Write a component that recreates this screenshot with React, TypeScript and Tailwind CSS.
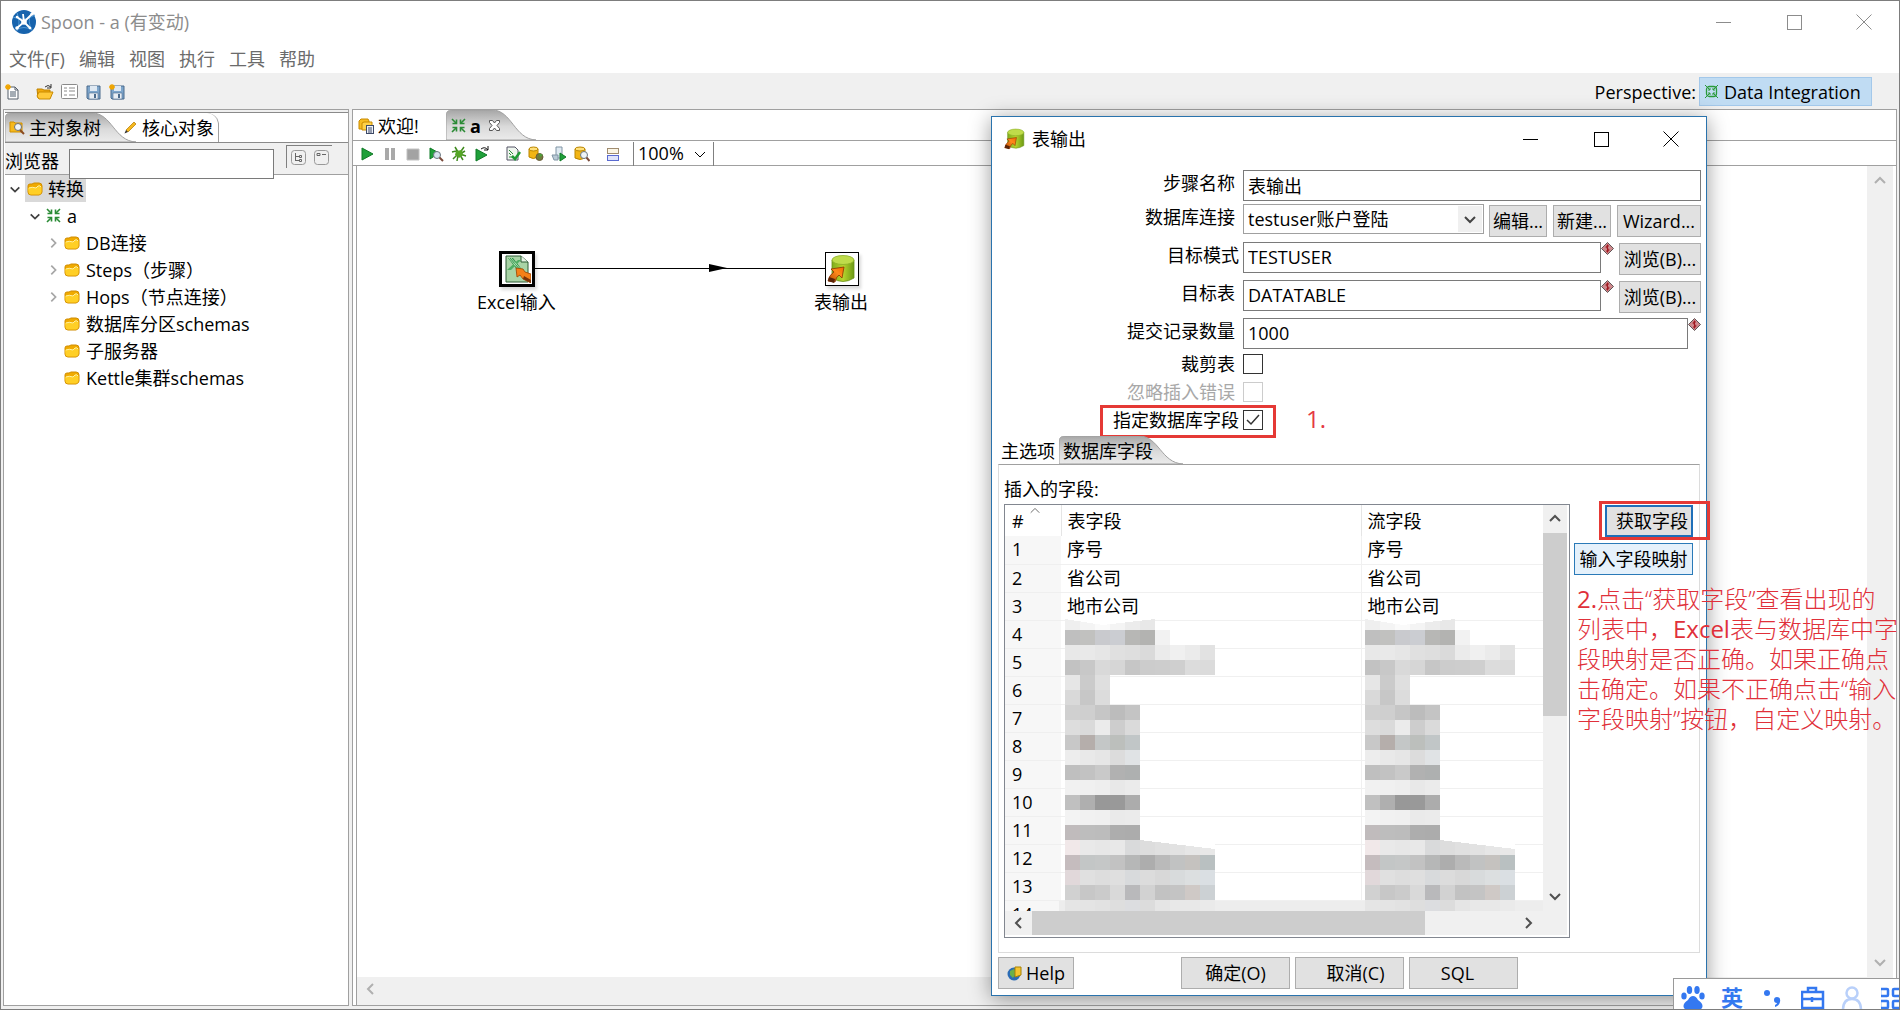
import React, { useState } from 'react';
import { twMerge } from 'tailwind-merge';

const MENUS = ['文件(F)', '编辑', '视图', '执行', '工具', '帮助'];

const TREE = [
  { label: 'DB连接', open: true },
  { label: 'Steps（步骤）', open: true },
  { label: 'Hops（节点连接）', open: true },
  { label: '数据库分区schemas', open: false },
  { label: '子服务器', open: false },
  { label: 'Kettle集群schemas', open: false },
];

const FIELDS = ['序号', '省公司', '地市公司', '', '', '', '', '', '', '', '', '', '', ''];

// masked field names, one row per 15px block line
const MASK = [
  ['efefef', 'f4f4f4', 'fafafa', 'f4f4f4', 'ececec', 'e8e8e8'],
  ['bfbfbf', 'c1c1bf', 'c9cace', 'cbcdd2', 'b7b7b5', 'b3b3b1', 'f2f2f2'],
  ['e8e8e8', 'e9e9e9', 'e6e6e6', 'e0e0e0', 'dedede', 'dadada', 'ebebeb', 'f0f0f0', 'ebebeb', 'e2e2e2'],
  ['c2c2c2', 'c8c8c8', 'd9d9d9', 'd6d6d6', 'c6c6c6', 'cccccc', 'cdcdcd', 'cfcfcf', 'dcdcdc', 'dbdbdb'],
  ['e6e6e6', 'cbcbcb', 'dfdfdf'],
  ['d9d9d9', 'c7c7c7', 'dcdcdc'],
  ['d0d0d0', 'cfcfcf', 'c6c6c6', 'bcbcbc', 'c4c4c4'],
  ['dddddd', 'dadada', 'ebebeb', 'cdcdcd', 'dadada'],
  ['c8c8c8', 'b5aeab', 'c4c7c7', 'bcbfbc', 'c1c6c7'],
  ['ededed', 'e9e9e9', 'e6e6e6', 'dcdcdc', 'e0e3e5'],
  ['bfbfbf', 'c2c2c2', 'c9c9c9', 'b1b1b1', 'aeb0b0'],
  ['f1f1f1', 'f0f0f0', 'eeeeee', 'e8e8e8', 'ebebeb'],
  ['c0c0c0', 'afafaf', '989898', '999999', 'acacac'],
  ['f3f3f3', 'f1f1f1', 'f0f0f0', 'eaeaea', 'ebebeb'],
  ['c0bbbc', 'bdbdbd', 'bcbcbc', 'adadad', 'acacac'],
  ['f1e8e9', 'e9e9e9', 'e7e7e7', 'e8e8e8', 'd9dadb', 'dddddd', 'e0e0e0', 'e2e2e2', 'e6e6e6', 'e8e8e8'],
  ['c5bcbe', 'c3c6c6', 'c5c7c7', 'c2c2c2', 'b6b7b7', 'adadad', 'bababa', 'c1c2c2', 'c5c2bf', 'b9c0c1'],
  ['e1d8da', 'e0e0e0', 'dddddd', 'dfdfdf', 'd8dadc', 'dcdcdc', 'd8d8d8', 'd8dbdc', 'dcdfe0', 'dadfe3'],
  ['d1d1d1', 'c7c7c7', 'cbcbcb', 'd9d9d9', 'b9b9bb', 'd2d2d2', 'c2c2c2', 'c4c4c4', 'cfc9c6', 'ccd1d4'],
  ['e5e5e5', 'e4e4e4', 'e2e2e2', 'dedede', 'dcdde0', 'dcdcdc', 'e5e5e5', 'e8e8e8', 'e8e8e8', 'eaeaea'],
];

const Mask: React.FC = () => (
  <svg width="150" height="300" viewBox="0 0 150 300" shapeRendering="crispEdges" aria-hidden="true">
    {MASK.map((row, y) => row.map((c, x) => <rect key={`${x}-${y}`} x={x * 15} y={y * 15} width="15" height="15" fill={`#${c}`} />))}
    <path d="M0 4 L38 10 L90 4 V0 H0 Z M75 225 L150 234 V225 Z" fill="#fff" />
  </svg>
);

type ChevronProps = { dir: 'up' | 'down' | 'left' | 'right'; className?: string; size?: number; weight?: number };

const CHEVRONS = { up: 'M2 9 L7 4 L12 9', down: 'M2 5 L7 10 L12 5', left: 'M9 2 L4 7 L9 12', right: 'M5 2 L10 7 L5 12' };

const Chevron: React.FC<ChevronProps> = ({ dir, className, size = 14, weight = 2 }) => (
  <svg width={size} height={size} viewBox="0 0 14 14" fill="none" stroke="currentColor" strokeWidth={weight} className={className} aria-hidden="true">
    <path d={CHEVRONS[dir]} />
  </svg>
);

const FolderIcon: React.FC = () => (
  <svg width="16" height="14" viewBox="0 0 16 14" aria-hidden="true">
    <path d="M1 4 Q1 2 3 2 H5 L7 1 H12 Q15 1 15 4 V10 Q15 12 12 13 H4 Q1 13 1 10 Z" fill="#f0aa00" stroke="#d08c00" />
    <path d="M1 6 Q5 4 9 6 L11 4 Q13 3 14.500 5 V10 Q14 12 12 12.500 H4 Q1.500 12.500 1.500 10 Z" fill="#ffcf26" />
    <path d="M2 6 Q5 4.500 9 6 L11 4 Q13 3 14 5" stroke="#fff0a0" fill="none" />
  </svg>
);

const TransIcon: React.FC<{ size?: number }> = ({ size = 15 }) => (
  <svg width={size} height={size} viewBox="0 0 15 15" stroke="#2a8b35" fill="none" strokeWidth="1.600" aria-hidden="true">
    <path d="M1 1 L5.500 5.500 M14 1 L9.500 5.500 M1 14 L5.500 9.500 M14 14 L9.500 9.500" />
    <path d="M1.500 5.500 H5.500 V1.500 M13.500 5.500 H9.500 V1.500 M1.500 9.500 H5.500 V13.500 M13.500 9.500 H9.500 V13.500" />
  </svg>
);

const PerspectiveIcon: React.FC = () => (
  <svg width="13" height="13" viewBox="0 0 13 13" stroke="#2a9a3a" fill="none" aria-hidden="true">
    <rect x="1.500" y="1.500" width="10" height="10" rx="3" strokeWidth="1.300" />
    <path d="M0 0 L5 5 M13 0 L8 5 M0 13 L5 8 M13 13 L8 8 M3 5 H5 V3 M10 5 H8 V3 M3 8 H5 V10 M10 8 H8 V10" />
  </svg>
);

const TableOutputIcon: React.FC<{ size: number }> = ({ size }) => (
  <svg width={size} height={size} viewBox="0 0 30 30" aria-hidden="true">
    <defs>
      <linearGradient id="cyl" x1="0" x2="1">
        <stop offset="0" stopColor="#7fae1c" />
        <stop offset="0.500" stopColor="#b6d32e" />
        <stop offset="1" stopColor="#6c9a14" />
      </linearGradient>
      <linearGradient id="arw" x1="0" y1="1" x2="1" y2="0">
        <stop offset="0" stopColor="#b24700" />
        <stop offset="0.600" stopColor="#ff8a1c" />
        <stop offset="1" stopColor="#f06a00" />
      </linearGradient>
    </defs>
    <path d="M5 6 V24 Q16 31 27 24 V6 Z" fill="url(#cyl)" stroke="#6a8f18" strokeWidth="0.800" />
    <ellipse cx="16" cy="6" rx="11" ry="4.500" fill="#bfdc4a" stroke="#8aae28" strokeWidth="0.800" />
    <path d="M4 15 L17 13 L15 24 L12 21 Q9 23 8 28 L1 27 Q2 21 7 18 Z" fill="url(#arw)" stroke="#8a3200" strokeWidth="0.800" />
    <path d="M1 27 L7 29 L8 25 L2 23 Z" fill="#5a2408" />
  </svg>
);

const ExcelIcon: React.FC = () => (
  <svg width="28" height="28" viewBox="0 0 28 28" aria-hidden="true">
    <path d="M3 1 H18 L25 7 V27 H3 Z" fill="#a9d3a6" stroke="#2c5a35" />
    <path d="M18 1 V7 H25" fill="#e6f3e4" stroke="#2c5a35" />
    <path d="M5 3 L10 3 L20 16 H15 Z" fill="#2f9447" />
    <path d="M18 5 L8 15 H4 L15 5 Z" fill="#4fae62" />
    <path d="M6 3 L17 16 M8 3 L19 16" stroke="#c8ecc9" strokeWidth="0.800" />
    <path d="M13 13 L20 14 L22 17 L28 19 V28 L20 24 L17 20 L14 22 Z" fill="#f58018" stroke="#9a4300" strokeWidth="0.800" />
    <path d="M20 24 L28 28 V25 L21 21 Z" fill="#7a3208" />
  </svg>
);

const SpoonLogo: React.FC = () => (
  <svg width="24" height="24" viewBox="0 0 24 24" aria-hidden="true">
    <circle cx="12" cy="12" r="12" fill="#1763ad" />
    <path d="M1 7 Q12 12 23 5 M5 3 Q9 12 5 21 M4 20 Q12 15 20 20 M19 3 Q15 12 20 20" stroke="#4f97d3" fill="none" />
    <path d="M5 7 L12 12 L20 4 M12 12 L5 18 M12 12 L18 18 M12 12 L11 4" stroke="#fff" strokeWidth="1.800" fill="none" />
    <circle cx="12" cy="12" r="2.800" fill="#fff" />
    <circle cx="5" cy="18" r="1.800" fill="#fff" />
    <circle cx="20" cy="4" r="1.600" fill="#fff" />
    <circle cx="5" cy="7" r="1.300" fill="#fff" />
    <circle cx="18" cy="18" r="1.300" fill="#fff" />
  </svg>
);

const NewStar = () => <path d="M3 0 V6 M0 3 H6 M1 1 L5 5 M5 1 L1 5" stroke="#f0a500" strokeWidth="1.300" />;

const NewFileIcon = () => (
  <svg width="16" height="16" viewBox="0 0 16 16" fill="none" aria-hidden="true">
    <path d="M3 3 H10 L13 6 V15 H3 Z" fill="#fff" stroke="#555f6b" />
    <path d="M10 3 V6 H13" stroke="#555f6b" />
    <path d="M5 8 H11 M5 10 H11 M5 12 H11" stroke="#4a5a6a" />
    <NewStar />
  </svg>
);

const OpenIcon = () => (
  <svg width="18" height="16" viewBox="0 0 18 16" fill="none" aria-hidden="true">
    <path d="M1 5 H6 L8 6 H14 V14 H2 Z" fill="#f2a90c" stroke="#bd8200" />
    <path d="M3 8 H17 L14 15 H3 L1 12 Z" fill="#ffc93a" stroke="#c98a00" />
    <path d="M9 3 Q12 0 15 3 M15 0 V4 H11" stroke="#333" />
  </svg>
);

const ListIcon = () => (
  <svg width="17" height="15" viewBox="0 0 17 15" fill="none" stroke="#8a8a8a" aria-hidden="true">
    <rect x="0.500" y="0.500" width="16" height="14" rx="1" fill="#fff" />
    <path d="M3 4 H6 M3 7 H6 M3 11 H6 M8 4 H14 M8 7 H14 M8 11 H14" />
  </svg>
);

const SaveIcon: React.FC<{ star?: boolean }> = ({ star }) => (
  <svg width="16" height="16" viewBox="0 0 16 16" fill="none" aria-hidden="true">
    <path d="M2 2 H15 V15 H3 L2 14 Z" fill="#7ea6cc" stroke="#4a6a8c" />
    <rect x="5" y="2" width="7" height="5" fill="#dfe9f3" />
    <rect x="4" y="9" width="9" height="6" fill="#e8eef4" stroke="#4a6a8c" strokeWidth="0.600" />
    <rect x="9" y="10" width="2" height="4" fill="#4a6a8c" />
    {star && <NewStar />}
  </svg>
);

const SearchTreeIcon = () => (
  <svg width="16" height="15" viewBox="0 0 16 15" fill="none" aria-hidden="true">
    <path d="M1 3 V2 H5 L6 3 H13 V12 H1 Z" fill="#f6b91c" stroke="#cf8f00" />
    <circle cx="9" cy="7" r="3.500" fill="#eef4f8" stroke="#6f6f6f" />
    <path d="M11 10 L15 14" stroke="#8a4a20" strokeWidth="2" />
  </svg>
);

const PencilIcon = () => (
  <svg width="13" height="13" viewBox="0 0 13 13" aria-hidden="true">
    <path d="M2 9 L10 1 L12 3 L4 11 Z" fill="#f5b81e" stroke="#b07800" strokeWidth="0.700" />
    <path d="M2 9 L4 11 L0.500 12.500 Z" fill="#333" />
  </svg>
);

const WelcomeIcon = () => (
  <svg width="17" height="16" viewBox="0 0 17 16" fill="none" aria-hidden="true">
    <path d="M1 3 L3 1 H10 L11 3 V11 H1 Z" fill="#f7bd22" stroke="#c98a00" />
    <path d="M4 5 L6 4 H14 V12 H4 Z" fill="#ffd24a" stroke="#c98a00" />
    <rect x="8.500" y="7.500" width="7" height="8" fill="#eef1f8" stroke="#3e4a66" />
    <path d="M10 10 H14 M10 12 H14 M10 14 H14" stroke="#3e4a66" />
  </svg>
);

const RUN_ICONS: { name: string; art: React.ReactNode }[] = [
  { name: 'Run', art: <path d="M3 2 L14 8 L3 14 Z" fill="#1fa03a" stroke="#0f7a26" /> },
  { name: 'Pause', art: <path d="M3 2 H7 V14 H3 Z M9 2 H13 V14 H9 Z" fill="#a9a9a9" /> },
  { name: 'Stop', art: <path d="M2 3 H14 V14 H2 Z" fill="#a3a3a3" stroke="#c2c2c2" /> },
  {
    name: 'Preview',
    art: (
      <>
        <path d="M2 2 L11 7 L2 13 Z" fill="#1fa03a" stroke="#0f7a26" />
        <circle cx="9" cy="9" r="3.500" fill="#d5e4ee" stroke="#6b7780" />
        <path d="M11.500 11.500 L15 15" stroke="#7a4a3a" strokeWidth="2" />
      </>
    ),
  },
  {
    name: 'Debug',
    art: (
      <>
        <path d="M1 6 L5 5 L8 8 L13 1 M2 13 L5 10 L8 8 M6 15 L7 9 M14 5 L9 8 L15 10 M12 14 L9 9 M4 1 L7 6" stroke="#3f8a1e" strokeWidth="1.500" />
        <path d="M5 5 L11 4 L12 9 L8 12 L4 9 Z" fill="#55a626" />
      </>
    ),
  },
  {
    name: 'Replay',
    art: (
      <>
        <path d="M2 3 L13 9 L2 15 Z" fill="#1fa03a" stroke="#0f7a26" />
        <path d="M7 3 Q11 0 14 4 M14 0 V4 H10" stroke="#111" />
      </>
    ),
  },
  {
    name: 'Verify',
    art: (
      <>
        <path d="M2 1 H10 L13 4 V14 H2 Z" fill="#eef5ee" stroke="#556" />
        <path d="M4 4 L8 8 M4 7 L6 9 M4 11 H8" stroke="#2d8a3c" />
        <path d="M7 10 L10 13 L15 6" stroke="#1f9a35" strokeWidth="2.500" />
      </>
    ),
  },
  {
    name: 'Impact',
    art: (
      <>
        <path d="M1 3 V11 Q5 14 10 11 V3 Z" fill="#f2b515" stroke="#b98500" />
        <ellipse cx="5.500" cy="3" rx="4.500" ry="2" fill="#ffe07a" stroke="#b98500" />
        <circle cx="11.500" cy="11" r="3.500" fill="#6e7d3a" stroke="#6a5a3a" />
        <path d="M11 7 L15 9 L12 11 Z" fill="#4ea03a" />
      </>
    ),
  },
  {
    name: 'SQL',
    art: (
      <>
        <path d="M5 1 H11 V12 H5 Z" fill="#dfeaf2" stroke="#8094a4" />
        <path d="M1 9 H7 V14 H3 Z" fill="#b9cad6" stroke="#8094a4" />
        <path d="M9 7 L15 11 L9 15 Z" fill="#1fa03a" stroke="#0f7a26" />
      </>
    ),
  },
  {
    name: 'Explore database',
    art: (
      <>
        <path d="M1 3 V12 Q6 15 11 12 V3 Z" fill="#f2b515" stroke="#b98500" />
        <ellipse cx="6" cy="3" rx="5" ry="2" fill="#ffe07a" stroke="#b98500" />
        <circle cx="10" cy="9" r="3.500" fill="#eef4f8" stroke="#6b7780" />
        <path d="M12.500 11.500 L15.500 15" stroke="#7a4a3a" strokeWidth="2" />
      </>
    ),
  },
  {
    name: 'Show results',
    art: (
      <>
        <rect x="2.500" y="2.500" width="11" height="5" fill="#fbf6e6" stroke="#a08c70" />
        <rect x="2.500" y="9.500" width="11" height="5" fill="#dfe4fb" stroke="#5a6ad0" />
      </>
    ),
  },
];

const VarIcon: React.FC = () => (
  <svg width="13" height="13" viewBox="0 0 13 13" className="shrink-0" aria-hidden="true">
    <path d="M6.500 0.500 L12.500 6.500 L6.500 12.500 L0.500 6.500 Z" fill="#cf8a8e" stroke="#5f5555" />
    <path d="M8 4 Q5 3 5 5 Q5 6 6.500 6.500 Q8 7 8 8 Q8 10 5 9 M6.500 2.500 V10.500" stroke="#a01820" fill="none" />
  </svg>
);

// sloped tab background, as the active tab of every folder
const TabShape: React.FC<{ width: number; height: number; id: string }> = ({ width, height, id }) => (
  <svg width={width} height={height} viewBox={`0 0 ${width} ${height}`} className="absolute top-0 left-0" aria-hidden="true">
    <defs>
      <linearGradient id={id} x1="0" x2="0" y1="0" y2="1">
        <stop offset="0" stopColor="#a6a6a6" />
        <stop offset="0.550" stopColor="#dadada" />
        <stop offset="1" stopColor="#ebebeb" />
      </linearGradient>
    </defs>
    <path
      d={`M0 ${height} V6 Q0 0 6 0 H${width - 44} C${width - 24} 0 ${width - 22} ${height - 1} ${width} ${height} Z`}
      fill={`url(#${id})`}
      stroke="#a0a0a0"
    />
  </svg>
);

const WindowButtons: React.FC<{ className?: string }> = ({ className = '' }) => (
  <div className={`flex ${className}`}>
    <button type="button" aria-label="最小化" className="flex h-8 w-[70px] items-center justify-center">
      <svg width="16" height="16" stroke="currentColor" shapeRendering="crispEdges"><path d="M0 8 H15" /></svg>
    </button>
    <button type="button" aria-label="最大化" className="flex h-8 w-[70px] items-center justify-center">
      <svg width="16" height="16" stroke="currentColor" fill="none" shapeRendering="crispEdges"><path d="M1 1 H15 V15 H1 Z" /></svg>
    </button>
    <button type="button" aria-label="关闭" className="flex h-8 w-[70px] items-center justify-center">
      <svg width="16" height="16" stroke="currentColor"><path d="M0.500 0.500 L15.500 15.500 M15.500 0.500 L0.500 15.500" /></svg>
    </button>
  </div>
);

type PushProps = React.ButtonHTMLAttributes<HTMLButtonElement>;

const PushButton: React.FC<PushProps> = ({ className, children, ...rest }) => (
  <button type="button" className={twMerge('h-8 border border-[#adadad] bg-[#e1e1e1] text-center whitespace-nowrap', className)} {...rest}>
    {children}
  </button>
);

const ObjectPanel: React.FC = () => {
  const [filter, setFilter] = useState('');

  return (
    <aside className="flex w-[346px] shrink-0 flex-col border border-[#a0a0a0] bg-white pl-px">
      <div className="h-[3px] border-b border-[#8a8a8a] bg-[#f0f0f0]" />
      <div className="flex h-[30px] border-b border-[#8a8a8a]" role="tablist">
        <button type="button" role="tab" aria-selected="true" className="relative h-[29px] w-[119px]">
          <TabShape width={131} height={29} id="tab-tree" />
          <span className="relative flex items-center gap-1 pl-1">
            <SearchTreeIcon />
            主对象树
          </span>
        </button>
        <button type="button" role="tab" aria-selected="false" className="flex h-[29px] w-[95px] items-center gap-[5px] rounded-tr-xl border-r border-[#a0a0a0]">
          <PencilIcon />
          核心对象
        </button>
      </div>
      <div className="flex h-[32px] border-b border-[#a0a0a0] bg-[#f0f0f0]">
        <label htmlFor="filter" className="w-16 pt-1">浏览器</label>
        <input
          id="filter"
          value={filter}
          onChange={(e) => setFilter(e.target.value)}
          className="relative mt-[6px] h-[30px] w-[205px] border border-[#7a7a7a] bg-white px-1 outline-none"
        />
        <div className="mt-[2px] ml-3 flex h-[23px] w-[46px] items-center justify-center gap-2 border-t border-l border-[#808080]">
          <button type="button" aria-label="展开" className="text-[#666]">
            <svg width="15" height="15" fill="none" stroke="currentColor"><rect x="0.500" y="0.500" width="14" height="14" rx="3" stroke="#999" /><path d="M4.500 3 V11 M4.500 6.500 H8 M4.500 10.500 H8 M8.500 5.500 H10.500 V7.500 H8.500 Z M8.500 9.500 H10.500 V11.500 H8.500 Z" /></svg>
          </button>
          <button type="button" aria-label="折叠" className="text-[#666]">
            <svg width="15" height="15" fill="none" stroke="currentColor"><rect x="0.500" y="0.500" width="14" height="14" rx="3" stroke="#999" /><path d="M3 3.500 H6 V5.500 H3 Z M8 4.500 H12" /></svg>
          </button>
        </div>
      </div>
      <ul className="leading-[26px]">
        <li className="flex h-[27px] items-center">
          <Chevron dir="down" size={12} className="ml-1 text-[#404040]" />
          <span className="ml-1 flex h-[27px] items-center gap-[5px] bg-[#d9d9d9] px-[2px]"><FolderIcon />转换</span>
        </li>
        <li className="flex h-[27px] items-center">
          <Chevron dir="down" size={12} className="ml-6 text-[#404040]" />
          <span className="ml-[5px] flex items-center gap-[6px]"><TransIcon />a</span>
        </li>
        {TREE.map((node) => (
          <li key={node.label} className="flex h-[27px] items-center">
            <span className="ml-[42px] w-[17px] text-[#a6a6a6]">{node.open && <Chevron dir="right" size={12} />}</span>
            <FolderIcon />
            <span className="ml-[6px]">{node.label}</span>
          </li>
        ))}
      </ul>
    </aside>
  );
};

const CanvasPanel: React.FC = () => (
  <main className="flex min-w-0 flex-1 flex-col border border-[#a0a0a0] bg-white">
    <div className="flex h-[31px] border-b border-[#a0a0a0]" role="tablist">
      <button type="button" role="tab" aria-selected="false" className="flex h-[30px] w-[93px] items-center gap-[3px] pt-px pl-[5px]">
        <WelcomeIcon />
        欢迎!
      </button>
      <button type="button" role="tab" aria-selected="true" className="relative h-[30px] w-[90px]">
        <TabShape width={90} height={30} id="tab-trans" />
        <span className="relative flex items-center gap-1 pt-px pl-[5px] font-bold">
          <TransIcon />
          a
          <svg width="11" height="11" viewBox="0 0 11 11" className="ml-1" fill="#fff" stroke="#555" aria-hidden="true">
            <path d="M0.500 0.500 H3.500 L5.500 3 L7.500 0.500 H10.500 V2.500 L8 5.500 L10.500 8.500 V10.500 H7.500 L5.500 8 L3.500 10.500 H0.500 V8.500 L3 5.500 L0.500 2.500 Z" />
          </svg>
        </span>
      </button>
    </div>
    <div className="mt-px flex h-6 items-center border-b border-[#a0a0a0] pl-[6px]">
      {RUN_ICONS.map((icon) => (
        <button
          key={icon.name}
          type="button"
          aria-label={icon.name}
          className={icon.name === 'Verify' || icon.name === 'Show results' ? 'ml-2 w-[23px]' : 'w-[23px]'}
        >
          <svg width="16" height="16" viewBox="0 0 16 16" fill="none">{icon.art}</svg>
        </button>
      ))}
      <div className="relative ml-[5px] h-6 border-x border-[#808080]">
        <select aria-label="缩放" defaultValue="100%" className="block h-[22px] w-[79px] appearance-none bg-transparent pl-1 leading-[22px] outline-none">
          <option>100%</option>
        </select>
        <Chevron dir="down" weight={1} className="pointer-events-none absolute top-[5px] right-[6px]" />
      </div>
    </div>
    <div className="mx-[3px] flex flex-1 border-l border-[#a0a0a0]">
      <div className="relative flex-1 overflow-hidden">
        <svg width="290" height="20" className="absolute top-[94px] left-[178px]" aria-hidden="true">
          <path d="M0 8.500 H290" stroke="#000" />
          <path d="M174 4 L192 8 L174 12 Z" />
        </svg>
        <div className="absolute top-[85px] left-[142px] flex h-9 w-9 items-center justify-center border-[3px] border-black bg-white shadow-[2px_3px_3px_rgba(0,0,0,0.15)]">
          <ExcelIcon />
        </div>
        <span className="absolute top-[122px] left-[120px]">Excel输入</span>
        <div className="absolute top-[86px] left-[468px] flex h-[34px] w-[34px] items-center justify-center border border-black bg-white shadow-[2px_3px_3px_rgba(0,0,0,0.15)]">
          <TableOutputIcon size={30} />
        </div>
        <span className="absolute top-[122px] left-[457px]">表输出</span>
      </div>
      <div className="flex w-[26px] flex-col items-center justify-between bg-[#f0f0f0] py-2 text-[#b0b0b0]">
        <Chevron dir="up" />
        <Chevron dir="down" />
      </div>
    </div>
    <div className="mx-[3px] flex h-7 items-center border-l border-[#a0a0a0] bg-[#f0f0f0] pb-1 pl-[7px] text-[#b0b0b0]">
      <Chevron dir="left" />
    </div>
  </main>
);

type RowProps = { label: string; htmlFor: string; tall?: boolean; tight?: boolean; children: React.ReactNode };

const FormRow: React.FC<RowProps> = ({ label, htmlFor, tall, tight, children }) => (
  <div className={`flex items-start ${tall ? 'h-[34px]' : 'h-[30px]'}`}>
    <label htmlFor={htmlFor} className={`w-[251px] shrink-0 text-right leading-[26px] ${tight ? 'pr-1' : 'pr-2'}`}>{label}</label>
    {children}
  </div>
);

const INPUT = 'h-[31px] min-w-0 flex-1 border border-[#7a7a7a] bg-white px-1 pb-[2px] outline-none';

const OutputDialog: React.FC = () => {
  const [form, setForm] = useState({ step: '表输出', schema: 'TESTUSER', table: 'DATATABLE', commit: '1000' });
  const [truncate, setTruncate] = useState(false);
  const [specify, setSpecify] = useState(true);

  const handleChange = (e: React.ChangeEvent<HTMLInputElement>) => {
    setForm({ ...form, [e.target.name]: e.target.value });
  };

  return (
    <section
      role="dialog"
      aria-label="表输出"
      className="absolute top-[115px] right-[192px] w-[716px] border border-[#2a73ad] bg-white shadow-[0_3px_20px_rgba(0,0,0,0.4)]"
    >
      <header className="flex h-[43px] items-center pl-3">
        <TableOutputIcon size={22} />
        <h2 className="flex-1 pl-[6px]">表输出</h2>
        <WindowButtons className="text-black" />
      </header>

      <form className="pt-[10px]" onSubmit={(e) => e.preventDefault()}>
        <div className="flex flex-col gap-1 pr-[5px]">
          <FormRow label="步骤名称" htmlFor="step">
            <input id="step" name="step" value={form.step} onChange={handleChange} className={INPUT} />
          </FormRow>
          <FormRow label="数据库连接" htmlFor="conn" tall>
            <div className="relative min-w-0 flex-1">
              <select id="conn" className="h-[30px] w-full appearance-none border border-[#a0a0a0] bg-white pl-1 outline-none">
                <option>testuser账户登陆</option>
              </select>
              <span className="pointer-events-none absolute top-[2px] right-[2px] flex h-[26px] w-6 items-center justify-center bg-[#f0f0f0] text-[#444]">
                <Chevron dir="down" />
              </span>
            </div>
            <PushButton className="mt-px ml-[5px] w-[58px]">编辑...</PushButton>
            <PushButton className="mt-px ml-[6px] w-[58px]">新建...</PushButton>
            <PushButton className="mt-px ml-[6px] w-[84px]">Wizard...</PushButton>
          </FormRow>
          <FormRow label="目标模式" htmlFor="schema" tall tight>
            <input id="schema" name="schema" value={form.schema} onChange={handleChange} className={INPUT} />
            <VarIcon />
            <PushButton className="mt-px ml-[5px] w-[82px]">浏览(B)...</PushButton>
          </FormRow>
          <FormRow label="目标表" htmlFor="table" tall>
            <input id="table" name="table" value={form.table} onChange={handleChange} className={INPUT} />
            <VarIcon />
            <PushButton className="mt-px ml-[5px] w-[82px]">浏览(B)...</PushButton>
          </FormRow>
          <FormRow label="提交记录数量" htmlFor="commit">
            <input id="commit" name="commit" value={form.commit} onChange={handleChange} className={INPUT} />
            <VarIcon />
          </FormRow>
        </div>

        <div className="mt-[6px] flex flex-col gap-2">
          <div className="flex h-5 items-center">
            <label htmlFor="truncate" className="w-[251px] pr-2 text-right">裁剪表</label>
            <input id="truncate" type="checkbox" checked={truncate} onChange={() => setTruncate(!truncate)} className="h-5 w-5 appearance-none border border-[#333]" />
          </div>
          <div className="flex h-5 items-center text-[#a8a8a8]">
            <label htmlFor="ignore" className="w-[251px] pr-2 text-right">忽略插入错误</label>
            <input id="ignore" type="checkbox" disabled className="h-5 w-5 appearance-none border border-[#ccc]" />
          </div>
          <div className="relative flex h-5 items-center">
            <label htmlFor="specify" className="w-[251px] pr-1 text-right">指定数据库字段</label>
            <input id="specify" type="checkbox" checked={specify} onChange={() => setSpecify(!specify)} className="h-5 w-5 appearance-none border border-[#333]" />
            {specify && (
              <svg width="20" height="20" className="pointer-events-none absolute top-0 left-[251px]" fill="none" stroke="#333" strokeWidth="1.500" aria-hidden="true">
                <path d="M4 10 L8 14 L16 5" />
              </svg>
            )}
            <span className="pointer-events-none absolute top-[-5px] left-[108px] h-[33px] w-[176px] border-[3px] border-[#e53935]" />
            <span className="absolute top-[-6px] left-[314px] text-2xl leading-[30px] text-[#e53945]">1.</span>
          </div>
        </div>

        <div className="mx-[6px] mt-[6px]">
          <div className="flex h-7" role="tablist">
            <button type="button" role="tab" aria-selected="false" className="w-[61px] pt-px pl-[3px] text-left">主选项</button>
            <button type="button" role="tab" aria-selected="true" className="relative h-7 w-[124px] pt-px text-left">
              <TabShape width={124} height={28} id="tab-fields" />
              <span className="relative pl-1">数据库字段</span>
            </button>
          </div>
          <div className="border border-[#dcdcdc] border-t-[#a0a0a0] pt-[10px] pr-[6px] pb-[14px] pl-[5px]">
            <p className="leading-7">插入的字段:</p>
            <div className="mt-px flex justify-between">
              <div className="flex h-[434px] w-[566px] flex-col border border-[#828790] pr-[2px] pb-[2px]">
                <div className="flex min-h-0 flex-1">
                  <div className="relative flex-1 overflow-hidden">
                    <table className="w-full table-fixed border-collapse text-left">
                      <thead>
                        <tr className="h-[31px]">
                          <th className="relative w-14 border-r border-[#e5e5e5] pl-[7px] font-normal">
                            #
                            <Chevron dir="up" size={12} weight={1} className="absolute top-0 left-6 text-[#555]" />
                          </th>
                          <th className="w-[300px] border-r border-[#e5e5e5] pl-[6px] font-normal">表字段</th>
                          <th className="pl-[6px] font-normal">流字段</th>
                        </tr>
                      </thead>
                      <tbody className="leading-[27px]">
                        {FIELDS.map((name, i) => (
                          <tr key={i} className="h-7">
                            <td className="border-b border-[#efefef] bg-[#f7f7f7] py-0 pl-[7px]">{i + 1}</td>
                            <td className="border-r border-b border-[#f0f0f0] py-0 pl-[6px]">{name}</td>
                            <td className="border-b border-[#f0f0f0] py-0 pl-[6px]">{name}</td>
                          </tr>
                        ))}
                      </tbody>
                    </table>
                    <div className="absolute right-0 bottom-0 left-[54px] h-[10px] bg-[#ededed]" />
                    <div className="absolute top-[110px] left-[60px]"><Mask /></div>
                    <div className="absolute top-[110px] left-[360px]"><Mask /></div>
                  </div>
                  <div className="flex w-6 flex-col items-center bg-[#f0f0f0] text-[#505050]">
                    <Chevron dir="up" className="my-[7px]" />
                    <div className="h-[183px] w-full bg-[#cdcdcd]" />
                    <Chevron dir="down" className="mt-auto mb-2" />
                  </div>
                </div>
                <div className="flex h-6 items-center bg-[#f0f0f0] text-[#505050]">
                  <Chevron dir="left" className="mr-[6px] ml-[7px] shrink-0" />
                  <div className="h-full w-[393px] bg-[#cdcdcd]" />
                  <Chevron dir="right" className="mr-8 ml-auto" />
                </div>
              </div>
              <div className="flex flex-col items-end gap-[6px] pt-px">
                <div className="relative">
                  <PushButton className="w-[88px] border-2 border-[#1f6fb8] pr-0 pl-[6px]">获取字段</PushButton>
                  <span className="pointer-events-none absolute top-[-4px] left-[-6px] h-[39px] w-[111px] border-[3px] border-[#e53935]" />
                </div>
                <PushButton className="w-[119px] border-[#2a7ab8] bg-[#e5f1fb]">输入字段映射</PushButton>
              </div>
            </div>
          </div>
        </div>

        <footer className="flex items-center gap-[5px] px-[6px] pt-1 pb-[6px]">
          <PushButton className="flex w-[76px] items-center justify-center gap-1">
            <svg width="15" height="15" viewBox="0 0 15 15" aria-hidden="true">
              <circle cx="7" cy="8" r="6.500" fill="#2b6cb5" />
              <path d="M3 5 L7 3 L9 7 L6 12 L3 9 Z" fill="#6ab04a" />
              <path d="M8 1 H14 V9 L8 11 Z" fill="#f4c430" stroke="#a88200" />
            </svg>
            Help
          </PushButton>
          <PushButton className="ml-[102px] w-[109px]">确定(O)</PushButton>
          <PushButton className="w-[109px] pl-3">取消(C)</PushButton>
          <PushButton className="w-[109px] pr-3">SQL</PushButton>
        </footer>
      </form>
    </section>
  );
};

const ImeBar: React.FC = () => (
  <div className="absolute right-0 bottom-0 flex h-[31px] w-[226px] items-start gap-4 overflow-hidden border-t border-l border-[#9a9a9a] bg-white pt-[7px] pl-[7px] text-[#3478f0]">
    <svg width="24" height="24" viewBox="0 0 24 24" fill="currentColor" className="shrink-0" aria-hidden="true">
      <ellipse cx="3" cy="10" rx="2.700" ry="3.500" />
      <ellipse cx="8.500" cy="4" rx="2.700" ry="4" />
      <ellipse cx="16" cy="4" rx="2.700" ry="4" />
      <ellipse cx="21" cy="10" rx="2.700" ry="3.500" />
      <path d="M12 10 Q15 10 17 14 Q23 18 21 22 Q19 25 12 24 Q5 25 3 22 Q1 18 7 14 Q9 10 12 10 Z" />
    </svg>
    <span className="w-6 shrink-0 text-[22px] leading-[22px] font-bold">英</span>
    <svg width="24" height="24" viewBox="0 0 24 24" fill="currentColor" className="shrink-0" aria-hidden="true">
      <circle cx="6" cy="7" r="3" />
      <path d="M13 14 Q13 11 16 11 Q20 11 19 16 Q18 20 14 21 V19 Q16 18 16 17 Q13 17 13 14 Z" />
    </svg>
    <svg width="24" height="24" viewBox="0 0 24 24" fill="none" stroke="currentColor" strokeWidth="2.500" className="shrink-0" aria-hidden="true">
      <path d="M7 6 V2 H15 V6 M1 6 H22 V22 H1 Z M1 13 H22 M11 11 V16" />
    </svg>
    <svg width="24" height="24" viewBox="0 0 24 24" fill="none" stroke="#b9d0fa" strokeWidth="2.500" className="shrink-0" aria-hidden="true">
      <circle cx="11" cy="7" r="5.500" />
      <path d="M2 24 Q2 13 11 13 Q20 13 20 24" />
    </svg>
    <svg width="24" height="24" viewBox="0 0 24 24" fill="none" stroke="currentColor" strokeWidth="2.500" className="shrink-0" aria-hidden="true">
      <rect x="-1" y="3" width="8" height="7" rx="1" />
      <rect x="12" y="3" width="8" height="7" rx="1" />
      <rect x="-1" y="15" width="8" height="7" rx="1" />
      <rect x="12" y="15" width="8" height="7" rx="1" />
    </svg>
  </div>
);

const App: React.FC = () => {
  return (
    <div className="relative flex h-screen flex-col overflow-hidden border-x border-y border-[#7d7d7d] bg-[#f0f0f0] font-['Open_Sans','Noto_Sans_CJK_SC',sans-serif] text-lg leading-7 text-black">
      <header className="flex h-[42px] shrink-0 items-center bg-white pl-[11px] text-[#8c8c8c]">
        <SpoonLogo />
        <h1 className="flex-1 pl-[5px]">Spoon - a (有变动)</h1>
        <WindowButtons />
      </header>
      <nav className="flex h-[30px] shrink-0 gap-[14px] bg-white pt-px pl-2 text-[#6b6b6b]">
        {MENUS.map((m) => (
          <button key={m} type="button">{m}</button>
        ))}
      </nav>
      <div className="flex h-9 shrink-0 items-center pt-px pl-1 text-black">
        <div className="flex flex-1 items-center gap-2">
          <button type="button" aria-label="新建" className="mr-[7px]"><NewFileIcon /></button>
          <button type="button" aria-label="打开"><OpenIcon /></button>
          <button type="button" aria-label="浏览资源库" className="-ml-px"><ListIcon /></button>
          <button type="button" aria-label="保存" className="-ml-px"><SaveIcon /></button>
          <button type="button" aria-label="另存为"><SaveIcon star /></button>
        </div>
        <span>Perspective:</span>
        <button type="button" className="mr-[27px] ml-[3px] flex h-[29px] w-[173px] items-center gap-[6px] border border-[#a3c8ea] bg-[#c0dcf3] px-[5px]">
          <PerspectiveIcon />
          Data Integration
        </button>
      </div>
      <div className="flex min-h-0 flex-1 gap-[3px] px-[2px] pb-[3px]">
        <ObjectPanel />
        <CanvasPanel />
      </div>

      <OutputDialog />

      <p className="absolute top-[583px] right-[-4px] w-[326px] text-2xl leading-[30px] font-light whitespace-nowrap text-[#e0303a]">
        <span className="font-normal">2.</span>点击“获取字段”查看出现的
        <br />
        列表中，<span className="font-normal">Excel</span>表与数据库中字
        <br />
        段映射是否正确。如果正确点
        <br />
        击确定。如果不正确点击“输入
        <br />
        字段映射”按钮，自定义映射。
      </p>

      <ImeBar />
    </div>
  );
};

export default App;
